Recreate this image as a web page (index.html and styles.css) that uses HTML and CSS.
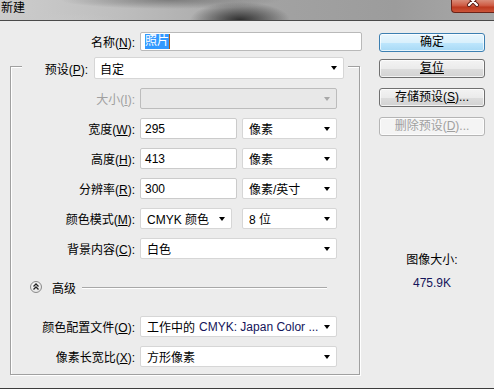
FILE: index.html
```html
<!DOCTYPE html>
<html lang="zh-CN">
<head>
    <meta charset="UTF-8">
    <meta name="viewport" content="width=device-width, initial-scale=1.0">
    <title>新建</title>
    <link rel="stylesheet" href="styles.css">
</head>
<body>
    <div class="titlebar">
        <span class="title">新建</span>
        <span class="close">
            <svg width="14" height="12" viewBox="0 0 14 12">
                <path d="M3 -3 L11 5 M11 -3 L3 5" stroke="#5a1a10" stroke-width="4" stroke-linecap="round"/>
                <path d="M3 -3 L11 5 M11 -3 L3 5" stroke="#fff" stroke-width="2.2" stroke-linecap="round"/>
            </svg>
        </span>
    </div>

    <div class="dialog">
        <div class="main">
            <div class="row name-row">
                <label class="label name-label">名称(<u>N</u>):</label>
                <div class="field input name-input"><span class="sel">照片</span><span class="caret"></span></div>
            </div>

            <div class="group">
                <div class="row preset-row">
                    <label class="label preset-label">预设(<u>P</u>):</label>
                    <div class="field select preset-select">自定<span class="arrow"></span></div>
                </div>

                <div class="rows">
                    <div class="row">
                        <label class="label disabled">大小(<u>I</u>):</label>
                        <div class="field select f-full off"><span class="arrow"></span></div>
                    </div>
                    <div class="row">
                        <label class="label">宽度(<u>W</u>):</label>
                        <div class="field input f-num">295</div>
                        <div class="field select f-unit">像素<span class="arrow"></span></div>
                    </div>
                    <div class="row">
                        <label class="label">高度(<u>H</u>):</label>
                        <div class="field input f-num">413</div>
                        <div class="field select f-unit">像素<span class="arrow"></span></div>
                    </div>
                    <div class="row">
                        <label class="label">分辨率(<u>R</u>):</label>
                        <div class="field input f-num">300</div>
                        <div class="field select f-unit">像素/英寸<span class="arrow"></span></div>
                    </div>
                    <div class="row">
                        <label class="label">颜色模式(<u>M</u>):</label>
                        <div class="field select f-mode">CMYK 颜色<span class="arrow"></span></div>
                        <div class="field select f-bits">8 位<span class="arrow"></span></div>
                    </div>
                    <div class="row">
                        <label class="label">背景内容(<u>C</u>):</label>
                        <div class="field select f-full">白色<span class="arrow"></span></div>
                    </div>
                </div>

                <div class="advanced">
                    <span class="toggle">
                        <svg width="12" height="12" viewBox="0 0 12 12">
                            <path d="M3.5 5.5 L6 3 L8.5 5.5 M3.5 8.5 L6 6 L8.5 8.5" fill="none" stroke="#222" stroke-width="1.3"/>
                        </svg>
                    </span>
                    <span class="adv-text">高级</span>
                    <span class="adv-line"></span>
                </div>

                <div class="rows rows-adv">
                    <div class="row">
                        <label class="label">颜色配置文件(<u>O</u>):</label>
                        <div class="field select f-full">工作中的 <span class="latin">CMYK: Japan Color ...</span><span class="arrow"></span></div>
                    </div>
                    <div class="row">
                        <label class="label">像素长宽比(<u>X</u>):</label>
                        <div class="field select f-full">方形像素<span class="arrow"></span></div>
                    </div>
                </div>
            </div>
        </div>

        <div class="side">
            <button class="btn btn-default">确定</button>
            <button class="btn btn-reset"><u>复位</u></button>
            <button class="btn btn-save">存储预设(<u>S</u>)...</button>
            <button class="btn btn-delete" disabled>删除预设(<u>D</u>)...</button>
            <div class="size-label">图像大小:</div>
            <div class="size-value">475.9K</div>
        </div>
    </div>
</body>
</html>
```

FILE: styles.css
```css
body {
    margin: 0;
    width: 494px;
    height: 389px;
    overflow: hidden;
    background-color: #ececec;
    font-family: 'Liberation Sans', 'Noto Sans CJK SC', sans-serif;
    font-size: 12px;
    color: #000;
}

/* 标题栏 */
.titlebar {
    display: flex;
    align-items: flex-start;
    height: 20px;
    border-bottom: 1px solid #4a4a4a;
    background:
        radial-gradient(ellipse 50px 18px at 240px 20px, rgba(40, 40, 40, 0.95), rgba(40, 40, 40, 0)),
        radial-gradient(ellipse 110px 9px at 170px 0, rgba(80, 80, 80, 0.55), rgba(80, 80, 80, 0)),
        radial-gradient(ellipse 80px 8px at 40px 20px, rgba(200, 200, 200, 0.7), rgba(200, 200, 200, 0)),
        linear-gradient(90deg, #cdcdcd 0, #bdbdbd 25%, #a2a2a2 55%, #9c9c9c 80%, #a8a8a8 100%);
}

.title {
    font-family: 'Noto Sans CJK SC', sans-serif;
    font-size: 12px;
    line-height: 14px;
    margin-left: 1px;
}

.close {
    display: flex;
    justify-content: center;
    margin-left: auto;
    width: 42px;
    height: 12px;
    border: 1px solid #6b2318;
    border-top: none;
    border-right: none;
    border-radius: 0 0 0 4px;
    background: linear-gradient(#d98c78, #cf5d45 45%, #bd3a20 60%, #cc5539);
}

/* 主体 */
.dialog {
    display: flex;
    box-sizing: border-box;
    height: 368px;
    padding: 11px 0 0 10px;
    border-bottom: 1px solid #3c3c3c;
}

.main {
    width: 352px;
}

.row {
    display: flex;
    align-items: center;
    height: 21px;
}

.label {
    flex: none;
    width: 124px;
    margin-right: 5px;
    text-align: right;
    white-space: nowrap;
}

.label.disabled {
    color: #a0a0a0;
}

.field {
    box-sizing: border-box;
    display: flex;
    align-items: center;
    height: 21px;
    padding: 0 6px 0 6px;
    background-color: #fff;
    border: 1px solid #d6d6d6;
    border-radius: 2px;
    white-space: nowrap;
}

.input {
    padding-left: 4px;
    border-color: #cbcbcb;
}

.select {
    justify-content: space-between;
}

.latin {
    color: #14145a;
    margin-left: 4px;
    margin-right: auto;
}

.arrow {
    flex: none;
    width: 0;
    height: 0;
    margin-left: 6px;
    border-left: 3.5px solid transparent;
    border-right: 3.5px solid transparent;
    border-top: 4px solid #000;
}

.select.off {
    background-color: #e8e8e8;
    border-color: #bcbcbc;
    justify-content: flex-end;
}

.select.off .arrow {
    border-top-color: #a8a8a8;
}

/* 名称 */
.name-row {
    height: 19px;
}

.name-label {
    width: 125px;
}

.name-input {
    width: 222px;
    height: 19px;
    border-color: #b9b9b9;
}

.sel {
    height: 15px;
    line-height: 15px;
    background-color: #3399ff;
    color: #fff;
}

.caret {
    width: 1px;
    height: 15px;
    background-color: #a85a18;
}

/* 分组框 */
.group {
    box-sizing: border-box;
    width: 350px;
    margin-top: 15px;
    padding-bottom: 7px;
    border: 1px solid #a0a0a0;
    box-shadow: 1px 1px 0 #fff, inset 1px 1px 0 #fff;
}

.preset-row {
    width: 326px;
    height: 22px;
    margin: -10px 0 0 11px;
    background-color: #ececec;
}

.preset-label {
    width: 66px;
    margin-right: 6px;
}

.preset-select {
    width: 250px;
    height: 22px;
    padding-left: 5px;
}

.rows {
    display: flex;
    flex-direction: column;
    gap: 9px;
    margin-top: 9px;
}

.rows-adv {
    margin-top: 21px;
}

.f-full { width: 197px; }
.f-num { width: 97px; }
.f-unit { width: 95px; margin-left: 5px; }
.f-mode { width: 92px; }
.f-bits { width: 95px; margin-left: 10px; }

/* 高级 */
.advanced {
    display: flex;
    align-items: center;
    height: 16px;
    margin-top: 20px;
    padding-left: 19px;
}

.toggle {
    display: flex;
    box-sizing: border-box;
    width: 12px;
    height: 12px;
    border: 1px solid #8a8a8a;
    border-radius: 50%;
    background: radial-gradient(circle at 40% 35%, #fff, #dcdcdc);
    align-items: center;
    justify-content: center;
}

.toggle svg {
    flex: none;
}

.adv-text {
    margin-left: 10px;
    font-size: 12px;
}

.adv-line {
    flex: 1;
    height: 1px;
    margin: 0 32px 0 6px;
    background-color: #a8a8a8;
    box-shadow: 0 1px 0 #fff;
}

/* 右侧按钮 */
.side {
    display: flex;
    flex-direction: column;
    width: 106px;
    margin-left: 17px;
}

.btn {
    box-sizing: border-box;
    height: 19px;
    padding: 0;
    font-family: inherit;
    font-size: 12px;
    line-height: 17px;
    color: #000;
    border: 1px solid #707070;
    border-radius: 3px;
    background: linear-gradient(#f3f3f3, #ebebeb 50%, #dddddd 51%, #d2d2d2);
    box-shadow: inset 0 0 0 1px rgba(255, 255, 255, 0.7);
}

.btn-default {
    margin-top: 1px;
    border-color: #3c7fb1;
    background: linear-gradient(#eaf6fd, #d9f0fc 50%, #bee6fd 51%, #a7d9f5);
}

.btn-reset { margin-top: 7px; }
.btn-save { margin-top: 10px; }

.btn-delete {
    margin-top: 10px;
    color: #a0a0a0;
    border-color: #b5b5b5;
    background: #f4f4f4;
}

.size-label {
    margin-top: 116px;
    line-height: 16px;
    text-align: center;
}

.size-value {
    margin-top: 7px;
    line-height: 16px;
    text-align: center;
    color: #14145a;
}
```
